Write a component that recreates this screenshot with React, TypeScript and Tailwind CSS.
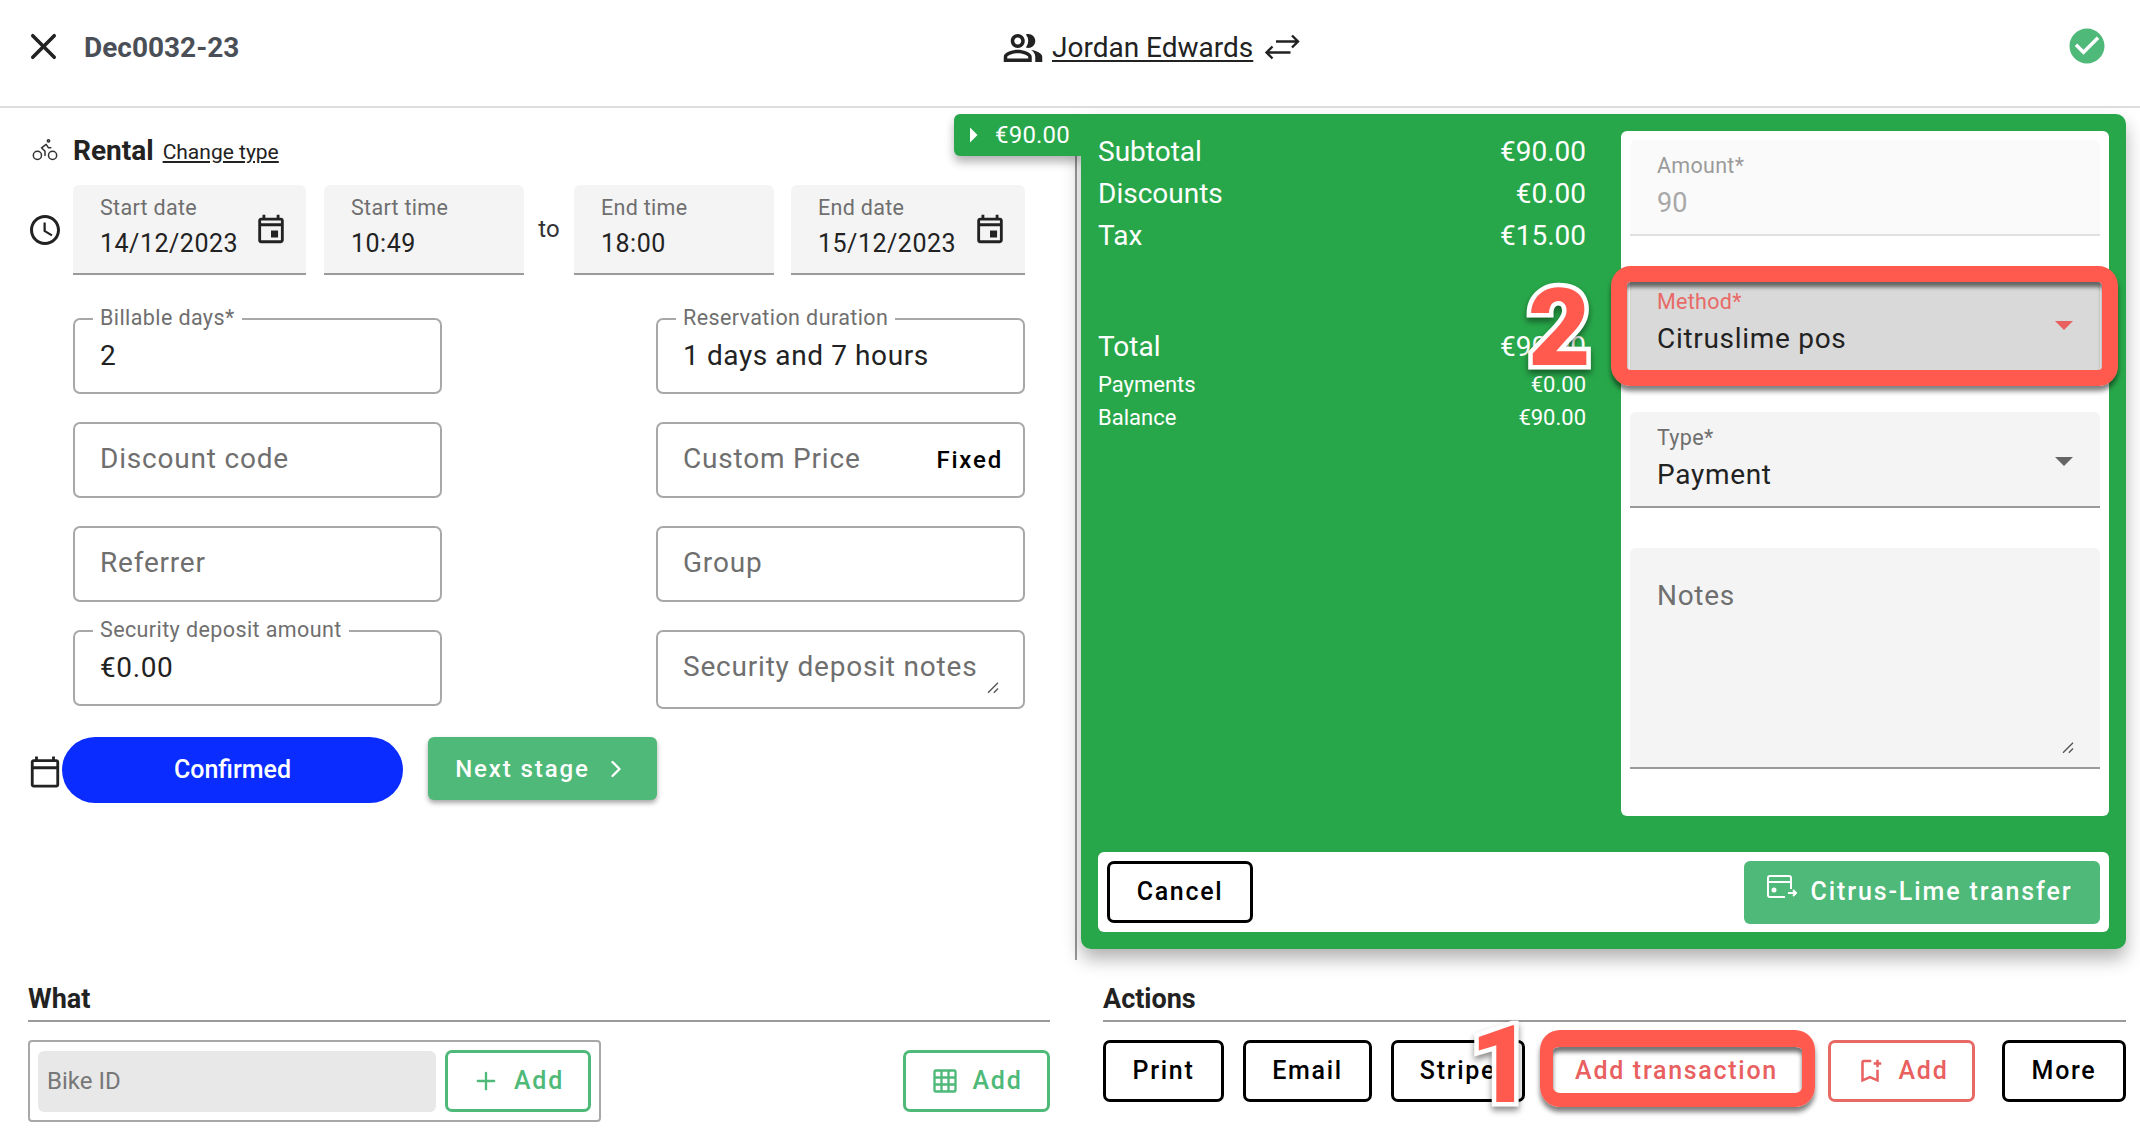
import React from "react";
import { Bike, ChevronRight, Plus, X } from "lucide-react";
import {
  MdArrowRight,
  MdCheckCircle,
  MdOutlineBookmarkAdd,
  MdOutlineCalendarToday,
  MdOutlineEvent,
  MdOutlineGridOn,
  MdOutlinePeopleAlt,
  MdOutlineSchedule,
} from "react-icons/md";

function DateField({ label, value, w, icon }: { label: string; value: string; w: string; icon?: boolean }) {
  return (
    <div className={`${w} h-[90px] relative bg-[#f4f4f4] rounded-t-[6px] border-b-2 border-[#9a9a9a] pl-[27px] pt-[11px]`}>
      <div className="text-[21.5px] leading-[24px] text-[#6f6f6f] tracking-[0.3px]">{label}</div>
      <div className="mt-[9px] text-[25px] leading-[30px] text-[#222] tracking-[0.5px]">{value}</div>
      {icon && <MdOutlineEvent className="absolute right-[18px] top-[27px] text-[34px] text-[#222]" />}
    </div>
  );
}

function Outlined({ label, value, placeholder, tall, right, resize }: { label?: string; value?: string; placeholder?: string; tall?: boolean; right?: string; resize?: boolean }) {
  return (
    <div className={`relative ${tall ? "h-[79px]" : "h-[76px]"} border-2 border-[#a8a8a8] rounded-[7px] pl-[25px] pr-[20px] flex items-center justify-between`}>
      {label && (
        <div className="absolute -top-[14px] left-[18px] bg-white px-[7px] text-[21.5px] leading-[24px] text-[#6f6f6f] tracking-[0.4px]">{label}</div>
      )}
      {value ? (
        <span className="text-[28px] text-[#222] tracking-[0.6px]">{value}</span>
      ) : (
        <span className={`text-[28px] text-[#6f6f6f] tracking-[0.8px] -mt-[2px] ${resize ? "-mt-[5px]" : ""}`}>{placeholder}</span>
      )}
      {right && <span className="text-[24px] font-medium text-black tracking-[1.8px]">{right}</span>}
      {resize && (
        <svg className="absolute right-[20px] bottom-[11px] w-[20px] h-[20px]" viewBox="0 0 24 24" fill="none" stroke="#555" strokeWidth="1.6">
          <path d="M6 20 18 8M13 20l5-5" />
        </svg>
      )}
    </div>
  );
}

function ActionBtn({ children, w, cls }: { children: React.ReactNode; w: string; cls?: string }) {
  return (
    <button className={`${w} h-[62px] rounded-[7px] border-[3px] flex items-center justify-center gap-[14px] text-[25px] font-medium tracking-[1.7px] ${cls ?? "border-black text-black"}`}>
      {children}
    </button>
  );
}

function BigBadge({ n, cls }: { n: string; cls: string }) {
  return (
    <div className={`absolute z-20 font-black leading-none text-[#ff5a4d] text-[108px] [font-family:Roboto,sans-serif] [-webkit-text-stroke:9px_white] [paint-order:stroke_fill] [filter:drop-shadow(0_4px_3px_rgba(0,0,0,0.45))] ${cls}`}>
      {n}
    </div>
  );
}

function RedBox({ cls }: { cls: string }) {
  return (
    <div className={`absolute z-10 border-[#ff5a4d] rounded-[20px] [box-shadow:0_5px_5px_rgba(0,0,0,0.5),inset_0_5px_4px_rgba(0,0,0,0.55)] ${cls}`} />
  );
}

function SummaryRow({ label, value, small }: { label: string; value: string; small?: boolean }) {
  return (
    <div className={`flex justify-between text-white ${small ? "h-[33px] text-[22px] leading-[33px]" : "h-[42px] text-[28px] leading-[42px]"}`}>
      <span>{label}</span>
      <span>{value}</span>
    </div>
  );
}

export default function App() {
  return (
    <div className="w-[2140px] h-[1128px] overflow-hidden bg-white flex flex-col text-[#222] [font-family:Roboto,'Liberation_Sans',sans-serif]">
      <header className="h-[108px] shrink-0 border-b-2 border-[#dedede] relative flex items-center justify-between pl-[22px] pr-[32px] pb-[14px]">
        <div className="flex items-center">
          <X className="w-[43px] h-[43px] text-[#222]" strokeWidth={2} />
          <span className="ml-[19px] mt-[3px] text-[28px] font-bold text-[#4a4f57]">Dec0032-23</span>
        </div>
        <div className="flex items-center absolute left-[1002px] top-[27px]">
          <MdOutlinePeopleAlt className="text-[42px] text-[#222]" />
          <span className="ml-[8px] text-[28px] text-[#222] underline underline-offset-[3px]">Jordan Edwards</span>
          <svg className="ml-[11px] w-[36px] h-[26px] -mt-[2px]" viewBox="0 0 36 26" fill="none" stroke="#222" strokeWidth="2.4">
            <path d="M12 7.5h22M28 1.5l6 6-6 6" />
            <path d="M2.5 18.5h24M8.5 12.5l-6 6 6 6" />
          </svg>
        </div>
        <MdCheckCircle className="text-[42px] text-[#4eb978]" />
      </header>

      <div className="flex-1 flex min-h-0">
        <div className="w-[1075px] shrink-0 flex flex-col pl-[28px] pr-[25px] pb-[6px]">
          <div className="flex items-center h-[40px] mt-[23px]">
            <Bike className="w-[28px] h-[28px] ml-[3px] -mt-[4px] text-[#333]" strokeWidth={1.3} />
            <span className="ml-[14px] text-[28px] font-bold text-[#222]">Rental</span>
            <span className="ml-[9px] mt-[3px] text-[21px] text-[#222] underline underline-offset-[2px]">Change type</span>
          </div>

          <div className="flex items-center mt-[14px]">
            <MdOutlineSchedule className="w-[36px] h-[36px] -ml-[1px] mr-[10px] text-[#222]" />
            <DateField label="Start date" value="14/12/2023" w="w-[233px]" icon />
            <DateField label="Start time" value="10:49" w="w-[200px] ml-[18px]" />
            <span className="w-[50px] text-center text-[24px] text-[#333] -mt-[2px]">to</span>
            <DateField label="End time" value="18:00" w="w-[200px]" />
            <DateField label="End date" value="15/12/2023" w="w-[234px] ml-[17px]" icon />
          </div>

          <div className="ml-[45px] w-[952px] mt-[43px] grid grid-cols-[369px_369px] justify-between gap-y-[28px] items-start">
            <Outlined label="Billable days*" value="2" />
            <Outlined label="Reservation duration" value="1 days and 7 hours" />
            <Outlined placeholder="Discount code" />
            <Outlined placeholder="Custom Price" right="Fixed" />
            <Outlined placeholder="Referrer" />
            <Outlined placeholder="Group" />
            <Outlined label="Security deposit amount" value="€0.00" />
            <Outlined placeholder="Security deposit notes" tall resize />
          </div>

          <div className="flex items-start mt-[28px]">
            <MdOutlineCalendarToday className="w-[34px] h-[34px] mt-[18px] text-[#222]" />
            <button className="w-[341px] h-[66px] rounded-full bg-[#0a2cff] text-white text-[25px] font-medium">Confirmed</button>
            <button className="ml-[25px] w-[229px] h-[63px] rounded-[6px] bg-[#4eb978] text-white text-[24px] font-medium tracking-[1.9px] flex items-center justify-center gap-[12px] shadow-[0_3px_5px_rgba(0,0,0,0.35)]">
              Next stage
              <ChevronRight className="w-[28px] h-[28px]" strokeWidth={2} />
            </button>
          </div>

          <div className="mt-auto">
            <div className="text-[27px] font-bold text-[#222] leading-[32px]">What</div>
            <div className="mt-[5px] border-t-2 border-[#9a9a9a]" />
            <div className="mt-[18px] flex items-start justify-between">
              <div className="w-[573px] h-[82px] border-2 border-[#a8a8a8] rounded-[4px] flex items-center pl-[8px] pr-[8px] gap-[9px]">
                <div className="w-[398px] h-[61px] rounded-[6px] bg-[#e8e8e8] pl-[9px] flex items-center text-[24px] text-[#777]">Bike ID</div>
                <ActionBtn w="w-[146px]" cls="border-[#4eb978] text-[#4eb978]">
                  <Plus className="w-[28px] h-[28px]" strokeWidth={2} />
                  Add
                </ActionBtn>
              </div>
              <ActionBtn w="w-[147px] mt-[10px]" cls="border-[#4eb978] text-[#4eb978]">
                <MdOutlineGridOn className="text-[28px]" />
                Add
              </ActionBtn>
            </div>
          </div>
        </div>

        <div className="flex-1 min-w-0 pr-[14px] pb-[26px] flex flex-col">
          <div className="mt-[6px] h-[846px] border-l-2 border-[#9a9a9a] pl-[4px]">
            <div className="relative h-[835px] bg-[#28a74a] rounded-[10px] rounded-tl-none p-[17px] flex flex-col shadow-[0_10px_18px_rgba(0,0,0,0.3)]">
              <div className="absolute -left-[127px] top-0 w-[127px] h-[42px] bg-[#28a74a] rounded-l-[6px] flex items-center text-white text-[24px] shadow-[0_6px_10px_rgba(0,0,0,0.3)] [clip-path:inset(-20px_0_-20px_-20px)]">
                <MdArrowRight className="text-[36px] ml-[1px] shrink-0" />
                <span className="ml-[4px] tracking-[0.2px]">€90.00</span>
              </div>

              <div className="flex h-[685px]">
                <div className="w-[488px] relative">
                  <SummaryRow label="Subtotal" value="€90.00" />
                  <SummaryRow label="Discounts" value="€0.00" />
                  <SummaryRow label="Tax" value="€15.00" />
                  <div className="mt-[69px]" />
                  <SummaryRow label="Total" value="€90.00" />
                  <SummaryRow label="Payments" value="€0.00" small />
                  <SummaryRow label="Balance" value="€90.00" small />
                  <BigBadge n="2" cls="left-[430px] top-[143px]" />
                </div>

                <div className="ml-[35px] w-[488px] bg-white rounded-[6px] p-[9px] flex flex-col gap-[40px]">
                  <div className="h-[96px] bg-[#fafafa] rounded-t-[6px] border-b-2 border-[#e0e0e0] pl-[27px] pt-[14px]">
                    <div className="text-[21.5px] leading-[24px] text-[#9a9a9a] tracking-[0.3px]">Amount*</div>
                    <div className="mt-[8px] text-[27px] leading-[34px] text-[#a8a8a8]">90</div>
                  </div>

                  <div className="relative h-[96px] bg-[#d9d9d9] rounded-t-[6px] border-b-2 border-[#ff5a4d] pl-[27px] pt-[14px]">
                    <RedBox cls="-left-[19px] -right-[18px] -top-[10px] -bottom-[16px] border-[16px]" />
                    <div className="text-[21.5px] leading-[24px] text-[#e86a66] tracking-[0.3px]">Method*</div>
                    <div className="mt-[8px] text-[28px] leading-[34px] text-[#222] tracking-[0.7px]">Citruslime pos</div>
                    <div className="absolute right-[27px] top-[45px] w-0 h-0 border-x-[9px] border-x-transparent border-t-[9px] border-t-[#e86060]" />
                  </div>

                  <div className="relative h-[96px] bg-[#f4f4f4] rounded-t-[6px] border-b-2 border-[#9a9a9a] pl-[27px] pt-[14px]">
                    <div className="text-[21.5px] leading-[24px] text-[#6f6f6f] tracking-[0.3px]">Type*</div>
                    <div className="mt-[8px] text-[28px] leading-[34px] text-[#222] tracking-[0.7px]">Payment</div>
                    <div className="absolute right-[27px] top-[45px] w-0 h-0 border-x-[9px] border-x-transparent border-t-[9px] border-t-[#666]" />
                  </div>

                  <div className="relative h-[221px] bg-[#f4f4f4] rounded-t-[6px] border-b-2 border-[#9a9a9a] pl-[27px] pt-[31px]">
                    <div className="text-[28px] leading-[34px] text-[#6f6f6f] tracking-[0.7px]">Notes</div>
                    <svg className="absolute right-[22px] bottom-[11px] w-[20px] h-[20px]" viewBox="0 0 24 24" fill="none" stroke="#555" strokeWidth="1.6">
                      <path d="M6 20 18 8M13 20l5-5" />
                    </svg>
                  </div>
                </div>
              </div>

              <div className="mt-[36px] h-[80px] bg-white rounded-[6px] flex items-center justify-between pl-[9px] pr-[9px]">
                <ActionBtn w="w-[146px]">Cancel</ActionBtn>
                <button className="w-[356px] h-[63px] rounded-[6px] bg-[#4eb978] text-white text-[25px] font-medium tracking-[1.9px] flex items-center justify-center gap-[13px] pr-[5px]">
                  <svg className="w-[31px] h-[24px] -mt-[10px]" viewBox="0 0 31 24" fill="none" stroke="white" strokeWidth="2">
                    <path d="M25 14V3a2 2 0 0 0-2-2H4a2 2 0 0 0-2 2v17a2 2 0 0 0 2 2h15" />
                    <path d="M2 7h23" />
                    <circle cx="8" cy="15" r="1.5" fill="white" />
                    <path d="M22 18h8M27 15l3 3-3 3" />
                  </svg>
                  Citrus-Lime transfer
                </button>
              </div>
            </div>
          </div>

          <div className="mt-auto ml-[28px] relative">
            <div className="text-[27px] font-bold text-[#222] leading-[32px]">Actions</div>
            <div className="mt-[5px] border-t-2 border-[#9a9a9a]" />
            <div className="mt-[18px] flex items-start">
              <ActionBtn w="w-[121px]">Print</ActionBtn>
              <ActionBtn w="w-[129px] ml-[19px]">Email</ActionBtn>
              <ActionBtn w="w-[134px] ml-[19px]">Stripe</ActionBtn>
              <div className="relative ml-[19px]">
                <ActionBtn w="w-[265px]" cls="border-[#e86a66] text-[#e86060]">Add transaction</ActionBtn>
                <RedBox cls="-left-[4px] -right-[6px] -top-[10px] -bottom-[5px] border-x-[13px] border-t-[17px] border-b-[14px]" />
              </div>
              <ActionBtn w="w-[147px] ml-[19px]" cls="border-[#e86a66] text-[#e86060]">
                <MdOutlineBookmarkAdd className="text-[30px]" />
                Add
              </ActionBtn>
              <ActionBtn w="w-[124px] ml-[27px]">More</ActionBtn>
            </div>
            <BigBadge n="1" cls="left-[367px] top-[28px]" />
          </div>
        </div>
      </div>
    </div>
  );
}
